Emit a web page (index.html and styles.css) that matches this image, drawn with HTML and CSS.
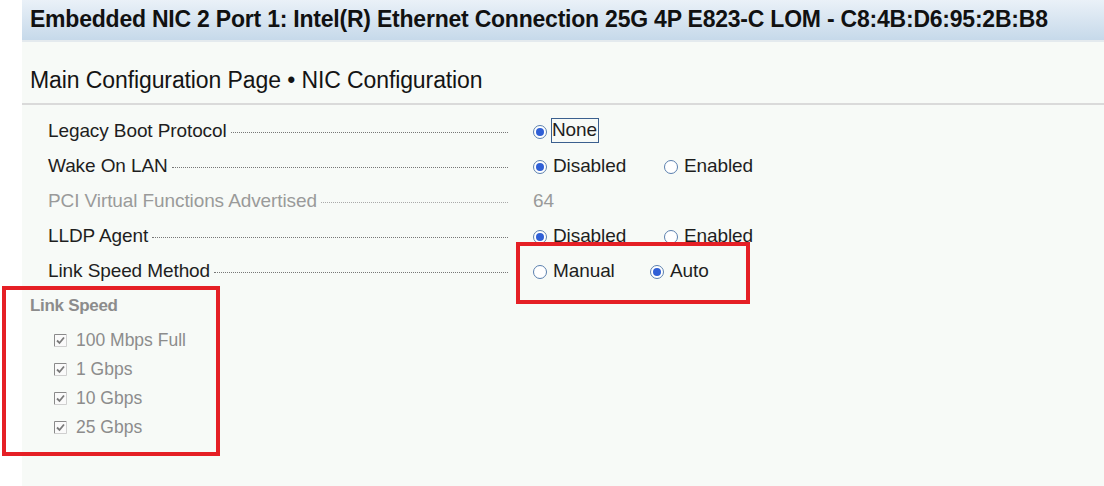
FILE: index.html
```html
<!DOCTYPE html>
<html>
<head>
<meta charset="utf-8">
<link rel="stylesheet" href="styles.css">
</head>
<body>
<div class="page">
  <div class="strip"></div>
  <div class="panel">
    <div class="header">Embedded NIC 2 Port 1: Intel(R) Ethernet Connection 25G 4P E823-C LOM - C8:4B:D6:95:2B:B8</div>
    <div class="title">Main Configuration Page • NIC Configuration</div>
    <div class="rows">
      <div class="row">
        <div class="label"><span>Legacy Boot Protocol</span><i class="dots"></i></div>
        <div class="value">
          <span class="opt"><span class="radio on"></span><span class="focus">None</span></span>
        </div>
      </div>
      <div class="row">
        <div class="label"><span>Wake On LAN</span><i class="dots"></i></div>
        <div class="value">
          <span class="opt w1"><span class="radio on"></span>Disabled</span>
          <span class="opt"><span class="radio"></span>Enabled</span>
        </div>
      </div>
      <div class="row dis">
        <div class="label"><span>PCI Virtual Functions Advertised</span><i class="dots"></i></div>
        <div class="value"><span class="num">64</span></div>
      </div>
      <div class="row">
        <div class="label"><span>LLDP Agent</span><i class="dots"></i></div>
        <div class="value">
          <span class="opt w1"><span class="radio on"></span>Disabled</span>
          <span class="opt"><span class="radio"></span>Enabled</span>
        </div>
      </div>
      <div class="row">
        <div class="label"><span>Link Speed Method</span><i class="dots"></i></div>
        <div class="value">
          <span class="opt w2"><span class="radio"></span>Manual</span>
          <span class="opt"><span class="radio on"></span>Auto</span>
        </div>
      </div>
    </div>
    <div class="speed">
      <div class="speed-title">Link Speed</div>
      <div class="check"><svg class="box" viewBox="0 0 13 13"><path d="M0.5 12.5V0.5H12.5" fill="none" stroke="#8a8a8a"/><path d="M12.5 0.5V12.5H0.5" fill="none" stroke="#cfcfcf"/><path d="M3 6.5L5.5 9L10 3.5" fill="none" stroke="#7a7a7a" stroke-width="1.8"/></svg>100 Mbps Full</div>
      <div class="check"><svg class="box" viewBox="0 0 13 13"><path d="M0.5 12.5V0.5H12.5" fill="none" stroke="#8a8a8a"/><path d="M12.5 0.5V12.5H0.5" fill="none" stroke="#cfcfcf"/><path d="M3 6.5L5.5 9L10 3.5" fill="none" stroke="#7a7a7a" stroke-width="1.8"/></svg>1 Gbps</div>
      <div class="check"><svg class="box" viewBox="0 0 13 13"><path d="M0.5 12.5V0.5H12.5" fill="none" stroke="#8a8a8a"/><path d="M12.5 0.5V12.5H0.5" fill="none" stroke="#cfcfcf"/><path d="M3 6.5L5.5 9L10 3.5" fill="none" stroke="#7a7a7a" stroke-width="1.8"/></svg>10 Gbps</div>
      <div class="check"><svg class="box" viewBox="0 0 13 13"><path d="M0.5 12.5V0.5H12.5" fill="none" stroke="#8a8a8a"/><path d="M12.5 0.5V12.5H0.5" fill="none" stroke="#cfcfcf"/><path d="M3 6.5L5.5 9L10 3.5" fill="none" stroke="#7a7a7a" stroke-width="1.8"/></svg>25 Gbps</div>
    </div>
  </div>
  <div class="hl hl1"></div>
  <div class="hl hl2"></div>
</div>
</body>
</html>
```
FILE: styles.css
```css
* { box-sizing: border-box; }
html, body { margin: 0; padding: 0; }
body {
  width: 1104px; height: 486px; overflow: hidden;
  background: #ffffff;
  font-family: "Liberation Sans", Arial, sans-serif;
  color: #1a1a1a;
}
.page { position: relative; display: flex; height: 486px; }
.strip { width: 22px; flex: none; background: #ffffff; }
.panel { flex: 1; background: #f7faf7; }
.header {
  height: 42px;
  background: linear-gradient(#eaf1f8, #c6d9ea);
  border-bottom: 2px solid #e4eaee;
  font-weight: bold;
  font-size: 23px;
  letter-spacing: -0.22px;
  padding: 6px 0 0 8px;
  color: #111;
  white-space: nowrap;
}
.title {
  font-size: 23px;
  letter-spacing: -0.1px;
  padding: 25px 0 0 8px;
  height: 63px;
  border-bottom: 2px solid #dadada;
  color: #141414;
}
.rows { padding-top: 8px; }
.row {
  display: flex; align-items: center;
  height: 35px;
  font-size: 19px;
  letter-spacing: -0.1px;
}
.label {
  width: 486px; flex: none;
  padding-left: 26px;
  display: flex; align-items: center;
  color: #1e1e1e;
}
.label span { white-space: nowrap; }
.dots {
  flex: 1; margin: 4px 0 0 4px;
  border-bottom: 1px dotted #777;
  height: 1px;
}
.value { display: flex; align-items: center; padding-left: 25px; color: #1e1e1e; }
.opt { display: flex; align-items: center; }
.opt.w1 { width: 131px; }
.opt.w2 { width: 117px; }
.radio {
  width: 14px; height: 14px; border-radius: 50%;
  border: 1px solid #5a7fae;
  background: #fff;
  margin-right: 6px;
  position: relative;
  flex: none;
  margin-top: 2px;
}
.radio.on::after {
  content: ""; position: absolute; left: 2px; top: 2px;
  width: 8px; height: 8px; border-radius: 50%;
  background: #2f5fd6;
}
.focus { border: 1px solid #3b5f8e; padding: 0 1px 1px 0; margin-left: -2px; line-height: 22px; }
.row.dis .label, .row.dis .value { color: #9a9a9a; }
.row.dis .dots { border-color: #aaa; }
.num { padding-left: 0; }
.speed { padding: 8px 0 0 8px; color: #8c8c8c; }
.speed-title { font-weight: bold; font-size: 17px; letter-spacing: -0.3px; height: 30px; }
.check { display: flex; align-items: center; height: 29px; font-size: 17.5px; padding-left: 24px; }
.box { width: 13px; height: 13px; margin-right: 9px; flex: none; background: #fafafa; }
.hl { position: absolute; border: 4px solid #e51f25; }
.hl1 { left: 516px; top: 242px; width: 234px; height: 62px; }
.hl2 { left: 2px; top: 286px; width: 218px; height: 170px; }
```
